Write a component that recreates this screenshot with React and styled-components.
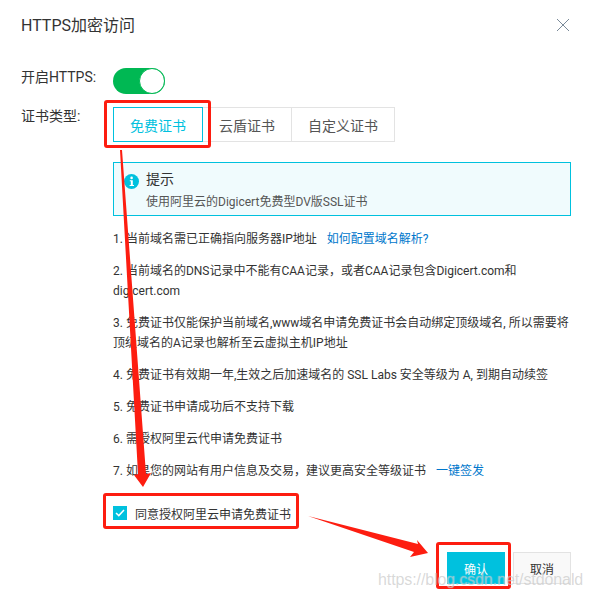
import styled, { createGlobalStyle } from 'styled-components';

const GlobalStyle = createGlobalStyle`
  html, body {
    margin: 0;
    padding: 0;
    background: #fff;
  }
  body {
    font-family: Roboto, "Noto Sans CJK SC", sans-serif;
    color: #333;
  }
`;

const Dialog = styled.div`
  position: relative;
  width: 592px;
  height: 599px;
  box-sizing: border-box;
  padding: 0 21px;
  overflow: hidden;
  background: #fff;
`;

const Header = styled.div`
  display: flex;
  align-items: center;
  justify-content: space-between;
  height: 50px;
  margin-bottom: 18px;
`;

const Title = styled.h2`
  margin: -3px 0 0;
  font-size: 16px;
  font-weight: 400;
  color: #333;
`;

const CloseIcon = styled.svg`
  display: block;
  width: 14px;
  height: 14px;
  margin-right: 1px;
  stroke: #7a8a99;
  stroke-width: 1;
  fill: none;
`;

const Field = styled.div`
  display: grid;
  grid-template-columns: 92px 1fr;
  margin-bottom: ${(p) => p.$gap || 0}px;
`;

const Label = styled.div`
  font-size: 14px;
  line-height: 20px;
  margin-top: -1px;
  color: #333;
`;

const Switch = styled.div`
  display: flex;
  justify-content: flex-end;
  box-sizing: border-box;
  width: 52px;
  height: 26px;
  border-radius: 13px;
  background: #00b853;
`;

const Knob = styled.span`
  box-sizing: border-box;
  width: 26px;
  height: 26px;
  border-radius: 50%;
  background: #fff;
  border: 1px solid #00b853;
`;

const Tabs = styled.div`
  display: flex;
  height: 35px;
`;

const Tab = styled.div`
  display: flex;
  align-items: center;
  justify-content: center;
  box-sizing: border-box;
  width: ${(p) => p.$width}px;
  margin-left: ${(p) => (p.$active ? 0 : -1)}px;
  border: 1px solid ${(p) => (p.$active ? '#00c1de' : '#e3e3e3')};
  font-size: 14px;
  color: ${(p) => (p.$active ? '#00c1de' : '#555')};
  position: ${(p) => (p.$active ? 'relative' : 'static')};
  z-index: ${(p) => (p.$active ? 1 : 'auto')};
`;

const Content = styled.div`
  margin-left: 92px;
`;

const Alert = styled.div`
  display: flex;
  box-sizing: border-box;
  width: 458px;
  height: 54px;
  margin-bottom: 13px;
  padding: 7px 0 0 10px;
  border: 1px solid #00c1de;
  background: #f0fbfd;
`;

const InfoIcon = styled.svg`
  flex: none;
  width: 15px;
  height: 15px;
  margin: 4px 7px 0 0;
`;

const AlertTitle = styled.div`
  font-size: 14px;
  line-height: 18px;
  color: #333;
`;

const AlertText = styled.div`
  margin-top: 5px;
  font-size: 12px;
  line-height: 18px;
  color: #555;
`;

const Steps = styled.ol`
  display: flex;
  flex-direction: column;
  gap: 12px;
  margin: 0 0 22px;
  padding: 0;
  list-style: none;
`;

const Step = styled.li`
  font-size: 12px;
  line-height: 20px;
  white-space: nowrap;
  color: #333;
`;

const StepLink = styled.a`
  margin-left: 10px;
  color: #0077cc;
  text-decoration: none;
`;

const Agree = styled.label`
  display: flex;
  align-items: center;
  gap: 8px;
  height: 20px;
  margin-bottom: 29px;
  font-size: 12px;
  color: #333;
`;

const CheckBox = styled.span`
  display: flex;
  align-items: center;
  justify-content: center;
  width: 14px;
  height: 14px;
  background: #00c1de;
`;

const Footer = styled.div`
  display: flex;
  justify-content: flex-end;
  gap: 8px;
`;

const Button = styled.button`
  box-sizing: border-box;
  width: 58px;
  height: 32px;
  padding: 0;
  border: 1px solid ${(p) => (p.$primary ? '#00c1de' : '#e3e3e3')};
  background: ${(p) => (p.$primary ? '#00c1de' : '#f9f9f9')};
  color: ${(p) => (p.$primary ? '#fff' : '#333')};
  font-family: inherit;
  font-size: 12px;
`;

const Ring = styled.div`
  position: absolute;
  left: ${(p) => p.$left}px;
  top: ${(p) => p.$top}px;
  width: ${(p) => p.$w}px;
  height: ${(p) => p.$h}px;
  box-sizing: border-box;
  border: 3px solid #fd1d10;
  border-radius: 3px;
  pointer-events: none;
`;

const Arrows = styled.svg`
  position: absolute;
  left: 0;
  top: 0;
  width: 592px;
  height: 599px;
  pointer-events: none;
`;

const Watermark = styled.div`
  position: absolute;
  left: 378px;
  top: 570px;
  font-family: "Liberation Sans", sans-serif;
  font-size: 16px;
  line-height: 20px;
  letter-spacing: -0.1px;
  white-space: nowrap;
  color: rgba(170, 170, 170, 0.45);
  text-shadow: 0 0 1px rgba(255, 255, 255, 0.6);
`;

function App() {
  return (
    <Dialog>
      <GlobalStyle />
      <Header>
        <Title>HTTPS加密访问</Title>
        <CloseIcon viewBox="0 0 14 14">
          <path d="M1 1 L13 13 M13 1 L1 13" />
        </CloseIcon>
      </Header>

      <Field $gap={13}>
        <Label>开启HTTPS:</Label>
        <Switch>
          <Knob />
        </Switch>
      </Field>

      <Field $gap={20}>
        <Label>证书类型:</Label>
        <Tabs>
          <Tab $width={90} $active>免费证书</Tab>
          <Tab $width={90}>云盾证书</Tab>
          <Tab $width={104}>自定义证书</Tab>
        </Tabs>
      </Field>

      <Content>
        <Alert>
          <InfoIcon viewBox="0 0 15 15">
            <circle cx="7.5" cy="7.5" r="7.5" fill="#00c1de" />
            <circle cx="7.6" cy="3.9" r="1.3" fill="#fff" />
            <path d="M5.8 6.2 H8.8 V10.9 H10 V12 H5.6 V10.9 H6.8 V7.3 H5.8 Z" fill="#fff" />
          </InfoIcon>
          <div>
            <AlertTitle>提示</AlertTitle>
            <AlertText>使用阿里云的Digicert免费型DV版SSL证书</AlertText>
          </div>
        </Alert>

        <Steps>
          <Step>
            1. 当前域名需已正确指向服务器IP地址
            <StepLink>如何配置域名解析?</StepLink>
          </Step>
          <Step>
            2. 当前域名的DNS记录中不能有CAA记录，或者CAA记录包含Digicert.com和
            <br />
            digicert.com
          </Step>
          <Step>
            3. 免费证书仅能保护当前域名,www域名申请免费证书会自动绑定顶级域名, 所以需要将
            <br />
            顶级域名的A记录也解析至云虚拟主机IP地址
          </Step>
          <Step>4. 免费证书有效期一年,生效之后加速域名的 SSL Labs 安全等级为 A, 到期自动续签</Step>
          <Step>5. 免费证书申请成功后不支持下载</Step>
          <Step>6. 需授权阿里云代申请免费证书</Step>
          <Step>
            7. 如果您的网站有用户信息及交易，建议更高安全等级证书
            <StepLink>一键签发</StepLink>
          </Step>
        </Steps>

        <Agree>
          <CheckBox>
            <svg width="10" height="8" viewBox="0 0 10 8" fill="none" stroke="#fff" strokeWidth="1.5">
              <path d="M1 4 L3.8 6.6 L9 1" />
            </svg>
          </CheckBox>
          同意授权阿里云申请免费证书
        </Agree>
      </Content>

      <Footer>
        <Button $primary>确认</Button>
        <Button>取消</Button>
      </Footer>

      <Ring $left={104} $top={100} $w={107} $h={48} />
      <Ring $left={103} $top={493} $w={196} $h={36} />
      <Ring $left={436} $top={542} $w={75} $h={47} />
      <Arrows viewBox="0 0 592 599">
        <polygon points="120,150 122,150 146,474 151,473 143,487 134,475 138,474" fill="#fd1d10" />
        <polygon points="308,516 418,544 417,540 428,553 410,557 414,552" fill="#fd1d10" />
      </Arrows>
      <Watermark>https://blog.csdn.net/stdonald</Watermark>
    </Dialog>
  );
}

export default App;
